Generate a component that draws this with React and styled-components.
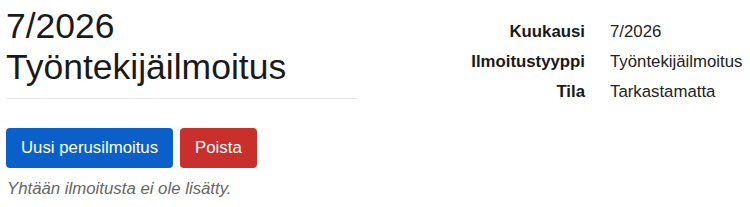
import React from 'react';
import styled, { createGlobalStyle } from 'styled-components';

const GlobalStyle = createGlobalStyle`
  body {
    margin: 0;
    background: #ffffff;
    font-family: "Liberation Sans", Arial, sans-serif;
    color: #222222;
  }
`;

const Page = styled.div`
  display: flex;
  align-items: flex-start;
  padding: 0 6px;
`;

const Main = styled.div`
  width: 352px;
`;

const Title = styled.h1`
  margin: 6px 0 0;
  font-size: 35.5px;
  font-weight: 400;
  line-height: 41px;
  color: #1a1a1a;
`;

const Rule = styled.hr`
  margin: 10px 0 0;
  border: 0;
  border-top: 1px solid #e8e8e8;
`;

const Actions = styled.div`
  display: flex;
  gap: 7px;
  margin-top: 29px;
`;

const Button = styled.button`
  height: 40px;
  padding: 0 15px;
  border: none;
  border-radius: 4px;
  font-family: "Liberation Sans", Arial, sans-serif;
  font-size: 16.8px;
  color: #ffffff;
  background-color: ${(props) => (props.danger ? '#c9302c' : '#0b5fc9')};
  cursor: pointer;
`;

const Empty = styled.p`
  margin: 11px 0 0 1px;
  font-size: 16.8px;
  font-style: italic;
  color: #666666;
`;

const Details = styled.dl`
  display: grid;
  grid-template-columns: 130px auto;
  column-gap: 25px;
  margin: 17px 0 0 97px;
  font-size: 16.8px;
  line-height: 30px;
`;

const Label = styled.dt`
  text-align: right;
  font-weight: 700;
  color: #1a1a1a;
`;

const Value = styled.dd`
  margin: 0;
  color: #222222;
`;

const details = [
  ['Kuukausi', '7/2026'],
  ['Ilmoitustyyppi', 'Työntekijäilmoitus'],
  ['Tila', 'Tarkastamatta'],
];

export default function App() {
  return (
    <>
      <GlobalStyle />
      <Page>
        <Main>
          <Title>
            7/2026
            <br />
            Työntekijäilmoitus
          </Title>
          <Rule />
          <Actions>
            <Button>Uusi perusilmoitus</Button>
            <Button danger>Poista</Button>
          </Actions>
          <Empty>Yhtään ilmoitusta ei ole lisätty.</Empty>
        </Main>
        <Details>
          {details.map(([label, value]) => (
            <React.Fragment key={label}>
              <Label>{label}</Label>
              <Value>{value}</Value>
            </React.Fragment>
          ))}
        </Details>
      </Page>
    </>
  );
}
